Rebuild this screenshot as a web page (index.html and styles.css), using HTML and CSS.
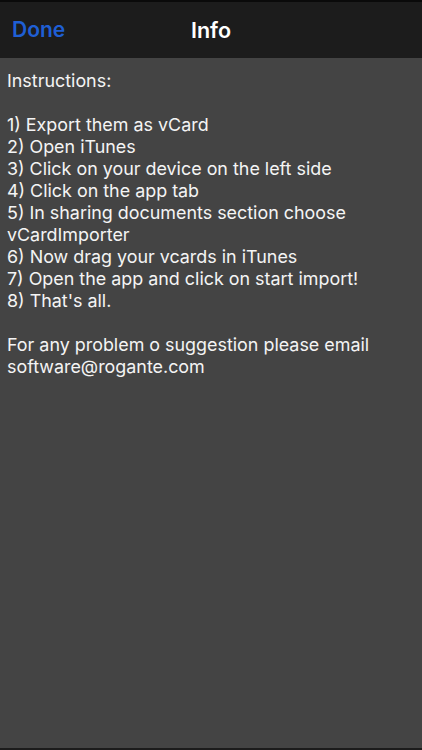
FILE: index.html
```html
<!DOCTYPE html>
<html>
<head>
<meta charset="utf-8">
<link rel="stylesheet" href="styles.css">
</head>
<body>
<div class="screen">
  <header class="navbar">
    <span class="nav-done">Done</span>
    <span class="nav-title">Info</span>
  </header>
  <main class="content">
    <p class="text">Instructions:<br><br>1) Export them as vCard<br>2) Open iTunes<br>3) Click on your device on the left side<br>4) Click on the app tab<br>5) In sharing documents section choose vCardImporter<br>6) Now drag your vcards in iTunes<br>7) Open the app and click on start import!<br>8) That's all.<br><br>For any problem o suggestion please email software@rogante.com</p>
  </main>
  <div class="bottom-line"></div>
</div>
</body>
</html>
```
FILE: styles.css
```css
html, body {
  margin: 0;
  padding: 0;
  background: #444444;
}
.screen {
  width: 422px;
  height: 750px;
  display: flex;
  flex-direction: column;
  font-family: Inter, "Liberation Sans", sans-serif;
}
.navbar {
  position: relative;
  height: 56px;
  border-top: 2px solid #0a0a0a;
  background: #1c1c1c;
  display: flex;
  align-items: center;
  justify-content: center;
  flex: none;
}
.nav-done {
  position: absolute;
  left: 12px;
  top: 15px;
  color: #1f5fd4;
  font-size: 21px;
  font-weight: 600;
}
.nav-title {
  color: #ffffff;
  font-size: 21.5px;
  font-weight: 600;
  margin-top: 0;
}
.content {
  flex: 1;
  background: #444444;
  padding: 12px 7px 0 7px;
}
.text {
  margin: 0;
  color: #f4f4f4;
  font-size: 17.9px;
  line-height: 22px;
  width: 390px;
}
.bottom-line {
  height: 2px;
  background: #1c1c1c;
  flex: none;
}
```
